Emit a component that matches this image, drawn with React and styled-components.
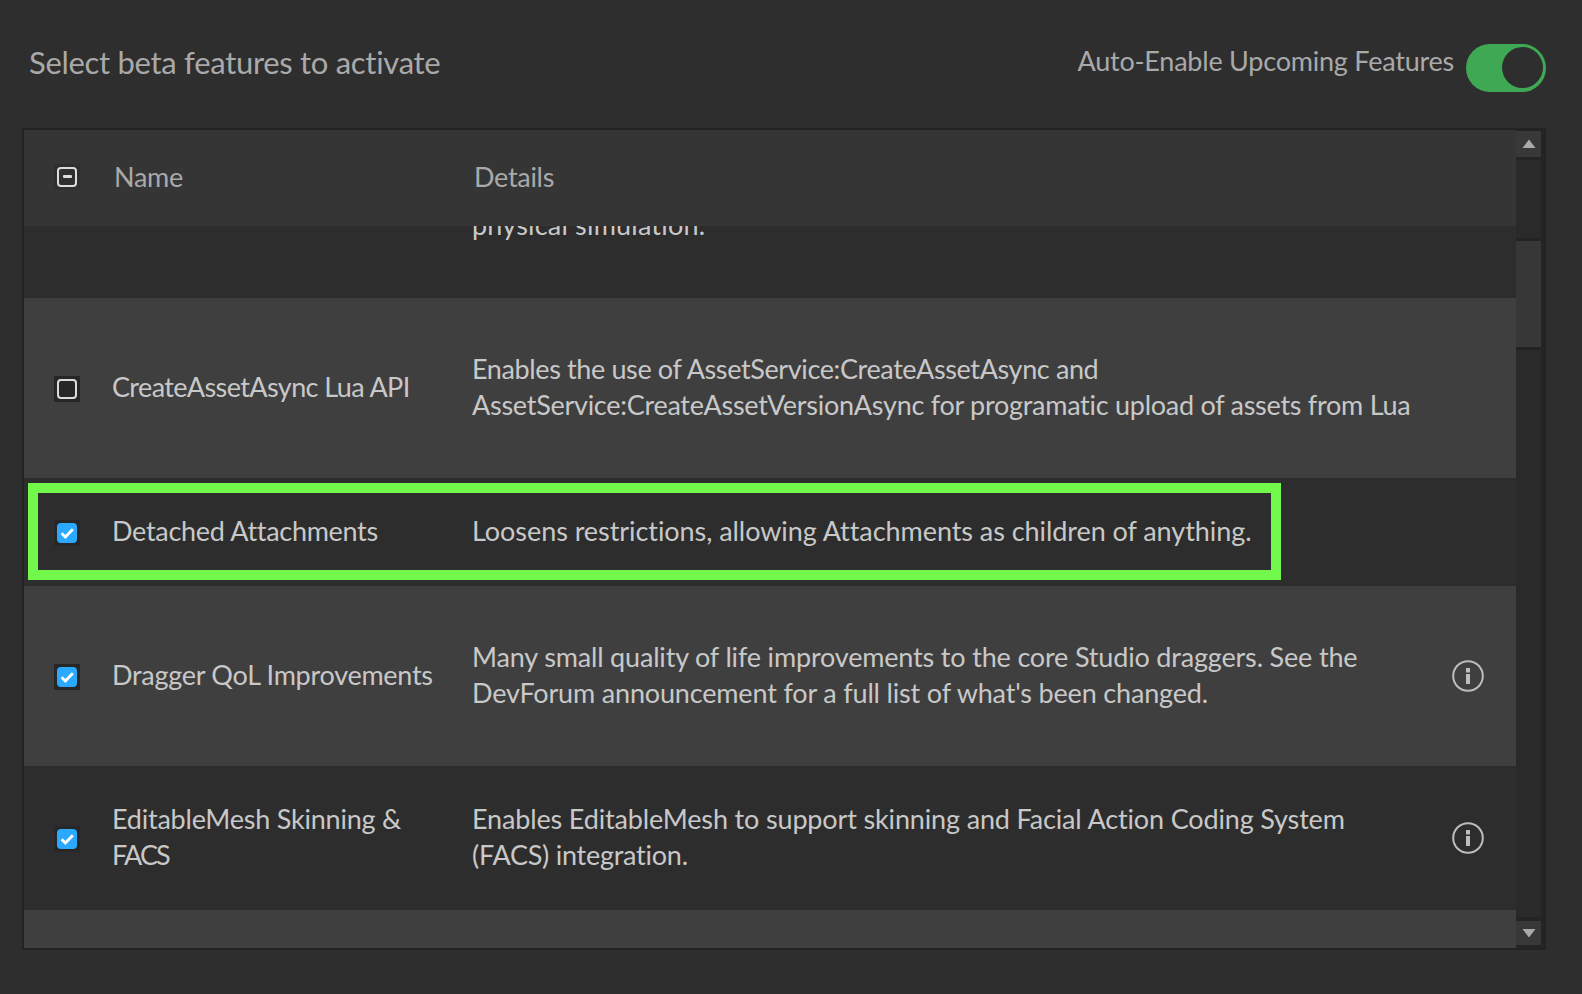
import styled, { createGlobalStyle } from "styled-components"

const GlobalStyle = createGlobalStyle`
    html, body {
        margin: 0;
        background: #2e2e2e;
    }
    * {
        box-sizing: border-box;
    }
`

// each line is [text, letter spacing in px]
const features = [
    { name: [], details: [["\u00a0", 0], ["physical simulation.", 0.2]], height: 180, state: "none" },
    {
        name: [["CreateAssetAsync Lua API", -0.6]],
        details: [
            ["Enables the use of AssetService:CreateAssetAsync and", -0.38],
            ["AssetService:CreateAssetVersionAsync for programatic upload of assets from Lua", -0.27],
        ],
        height: 180,
        state: "off",
    },
    {
        name: [["Detached Attachments", -0.3]],
        details: [["Loosens restrictions, allowing Attachments as children of anything.", -0.06]],
        height: 108,
        state: "on",
        highlighted: true,
    },
    {
        name: [["Dragger QoL Improvements", -0.27]],
        details: [
            ["Many small quality of life improvements to the core Studio draggers. See the", -0.17],
            ["DevForum announcement for a full list of what's been changed.", -0.17],
        ],
        height: 180,
        state: "on",
        info: true,
    },
    {
        name: [["EditableMesh Skinning &", -0.22], ["FACS", -1.8]],
        details: [
            ["Enables EditableMesh to support skinning and Facial Action Coding System", -0.15],
            ["(FACS) integration.", -0.25],
        ],
        height: 144,
        state: "on",
        info: true,
    },
    { name: [], details: [["\u00a0", 0]], height: 180, state: "none" },
]

const Page = styled.div`
    width: 1582px;
    height: 994px;
    padding: 0 36px 0 22px;
    overflow: hidden;
    background: #2e2e2e;
    font-family: "Lato", "Noto Sans", sans-serif;
`

const TopBar = styled.header`
    height: 128px;
    padding: 44px 0 0 7px;
    display: flex;
    justify-content: space-between;
    align-items: flex-start;
`

const Title = styled.h1`
    margin: -1px 0 0;
    font-size: 31px;
    font-weight: 400;
    line-height: 38px;
    letter-spacing: -0.3px;
    color: #a9a9a9;
`

const AutoEnable = styled.div`
    display: flex;
    align-items: flex-start;
    gap: 12px;
`

const AutoLabel = styled.span`
    margin-top: -2px;
    font-size: 27px;
    line-height: 38px;
    letter-spacing: -0.23px;
    color: #a9a9a9;
`

const Toggle = styled.div`
    width: 80px;
    height: 48px;
    padding: 3px;
    border-radius: 24px;
    background: #3fa854;
    display: flex;
    justify-content: flex-end;
`

const ToggleKnob = styled.div`
    width: 41px;
    height: 41px;
    border-radius: 50%;
    background: #2e2e2e;
`

const Frame = styled.section`
    width: 1524px;
    height: 822px;
    border: 2px solid #232323;
    display: flex;
`

const TableArea = styled.div`
    width: 1492px;
    display: flex;
    flex-direction: column;
    overflow: hidden;
`

const columns = "88px 360px 948px 96px"

const HeaderRow = styled.div`
    flex: 0 0 96px;
    display: grid;
    grid-template-columns: ${columns};
    align-items: center;
    background: #353535;
    font-size: 27px;
    letter-spacing: -0.3px;
    color: #a9a9a9;
`

const HeaderLabel = styled.span`
    padding: 0 0 3px 2px;
`

const Viewport = styled.div`
    flex: 1;
    overflow: hidden;
`

const RowList = styled.div`
    margin-top: -108px;
`

const Row = styled.div`
    position: relative;
    height: ${(p) => p.$height}px;
    display: grid;
    grid-template-columns: ${columns};
    align-items: center;
    background: ${(p) => (p.$light ? "#3f3f3f" : "#2d2d2d")};
    font-size: 27px;
    line-height: 36px;
    color: #c8c8c8;
`

const CheckCell = styled.div`
    padding: ${(p) => (p.$header ? "0 0 2px 30px" : "2px 0 0 30px")};
    display: flex;
`

const CheckWrap = styled.div`
    width: 26px;
    height: 26px;
    padding: 3px;
    background: ${(p) => (p.$header ? "#2f2f2f" : "#272727")};
`

const CheckBox = styled.div`
    width: 20px;
    height: 20px;
    border-radius: 4px;
    border: ${(p) => (p.$on ? "none" : "2px solid #dcdcdc")};
    background: ${(p) => (p.$on ? "#2aa9ff" : "transparent")};
    display: flex;
    align-items: center;
    justify-content: center;
`

const Minus = styled.div`
    width: 9px;
    height: 3px;
    margin-top: -2px;
    border-radius: 1px;
    background: #dcdcdc;
`

const TextCell = styled.div`
    padding-bottom: 2px;
`

const Line = styled.div`
    white-space: nowrap;
    letter-spacing: ${(p) => p.$spacing}px;
`

const InfoCell = styled.div`
    display: flex;
    justify-content: center;
`

const Highlight = styled.div`
    position: absolute;
    left: 4px;
    top: 5px;
    width: 1253px;
    height: 97px;
    border: 10px solid #72f84b;
    pointer-events: none;
`

const Scrollbar = styled.aside`
    width: 28px;
    padding: 1px 3px 3px 0;
    background: #242424;
    display: flex;
    flex-direction: column;
`

const ScrollButton = styled.div`
    flex: 0 0 ${(p) => p.$size}px;
    background: #383838;
    display: flex;
    align-items: center;
    justify-content: center;
`

const ScrollTrack = styled.div`
    flex: 1;
    margin: 3px 0 4px;
    padding-top: 78px;
    background: #2a2a2a;
`

const ScrollThumb = styled.div`
    height: 112px;
    background: #373737;
    border-top: 3px solid #232323;
    border-bottom: 3px solid #232323;
`

function CheckIcon() {
    return (
        <svg width="20" height="20" viewBox="0 0 20 20" fill="none">
            <path d="M4.6 10.2 L8.4 14 L15.8 6.2" stroke="#fff" strokeWidth="2.8" />
        </svg>
    )
}

function InfoIcon() {
    return (
        <svg width="32" height="32" viewBox="0 0 32 32" fill="none">
            <circle cx="16" cy="16" r="14.8" stroke="#bdbdbd" strokeWidth="2" />
            <rect x="14" y="8" width="4" height="4.5" fill="#bdbdbd" />
            <rect x="14" y="14" width="4" height="10" fill="#bdbdbd" />
        </svg>
    )
}

function Arrow({ down }) {
    return (
        <svg width="14" height="10" viewBox="0 0 14 10">
            <path
                d={down ? "M0.5 1 H13.5 L7 9.5 Z" : "M0.5 9 H13.5 L7 0.5 Z"}
                fill="#aaaaaa"
            />
        </svg>
    )
}

function Checkbox({ state }) {
    if (state === "none") return null
    return (
        <CheckWrap>
            <CheckBox $on={state === "on"}>
                {state === "on" && <CheckIcon />}
            </CheckBox>
        </CheckWrap>
    )
}

function Lines({ lines }) {
    return (
        <TextCell>
            {lines.map(([text, spacing]) => (
                <Line key={text} $spacing={spacing}>{text}</Line>
            ))}
        </TextCell>
    )
}

function FeatureRow({ feature, light }) {
    return (
        <Row $height={feature.height} $light={light}>
            <CheckCell>
                <Checkbox state={feature.state} />
            </CheckCell>
            <Lines lines={feature.name} />
            <Lines lines={feature.details} />
            <InfoCell>{feature.info && <InfoIcon />}</InfoCell>
            {feature.highlighted && <Highlight />}
        </Row>
    )
}

export default function App() {
    return (
        <>
            <GlobalStyle />
            <Page>
                <TopBar>
                    <Title>Select beta features to activate</Title>
                    <AutoEnable>
                        <AutoLabel>Auto-Enable Upcoming Features</AutoLabel>
                        <Toggle>
                            <ToggleKnob />
                        </Toggle>
                    </AutoEnable>
                </TopBar>
                <Frame>
                    <TableArea>
                        <HeaderRow>
                            <CheckCell $header>
                                <CheckWrap $header>
                                    <CheckBox>
                                        <Minus />
                                    </CheckBox>
                                </CheckWrap>
                            </CheckCell>
                            <HeaderLabel>Name</HeaderLabel>
                            <HeaderLabel>Details</HeaderLabel>
                        </HeaderRow>
                        <Viewport>
                            <RowList>
                                {features.map((feature, i) => (
                                    <FeatureRow key={i} feature={feature} light={i % 2 === 1} />
                                ))}
                            </RowList>
                        </Viewport>
                    </TableArea>
                    <Scrollbar>
                        <ScrollButton $size={26}>
                            <Arrow />
                        </ScrollButton>
                        <ScrollTrack>
                            <ScrollThumb />
                        </ScrollTrack>
                        <ScrollButton $size={24}>
                            <Arrow down />
                        </ScrollButton>
                    </Scrollbar>
                </Frame>
            </Page>
        </>
    )
}
